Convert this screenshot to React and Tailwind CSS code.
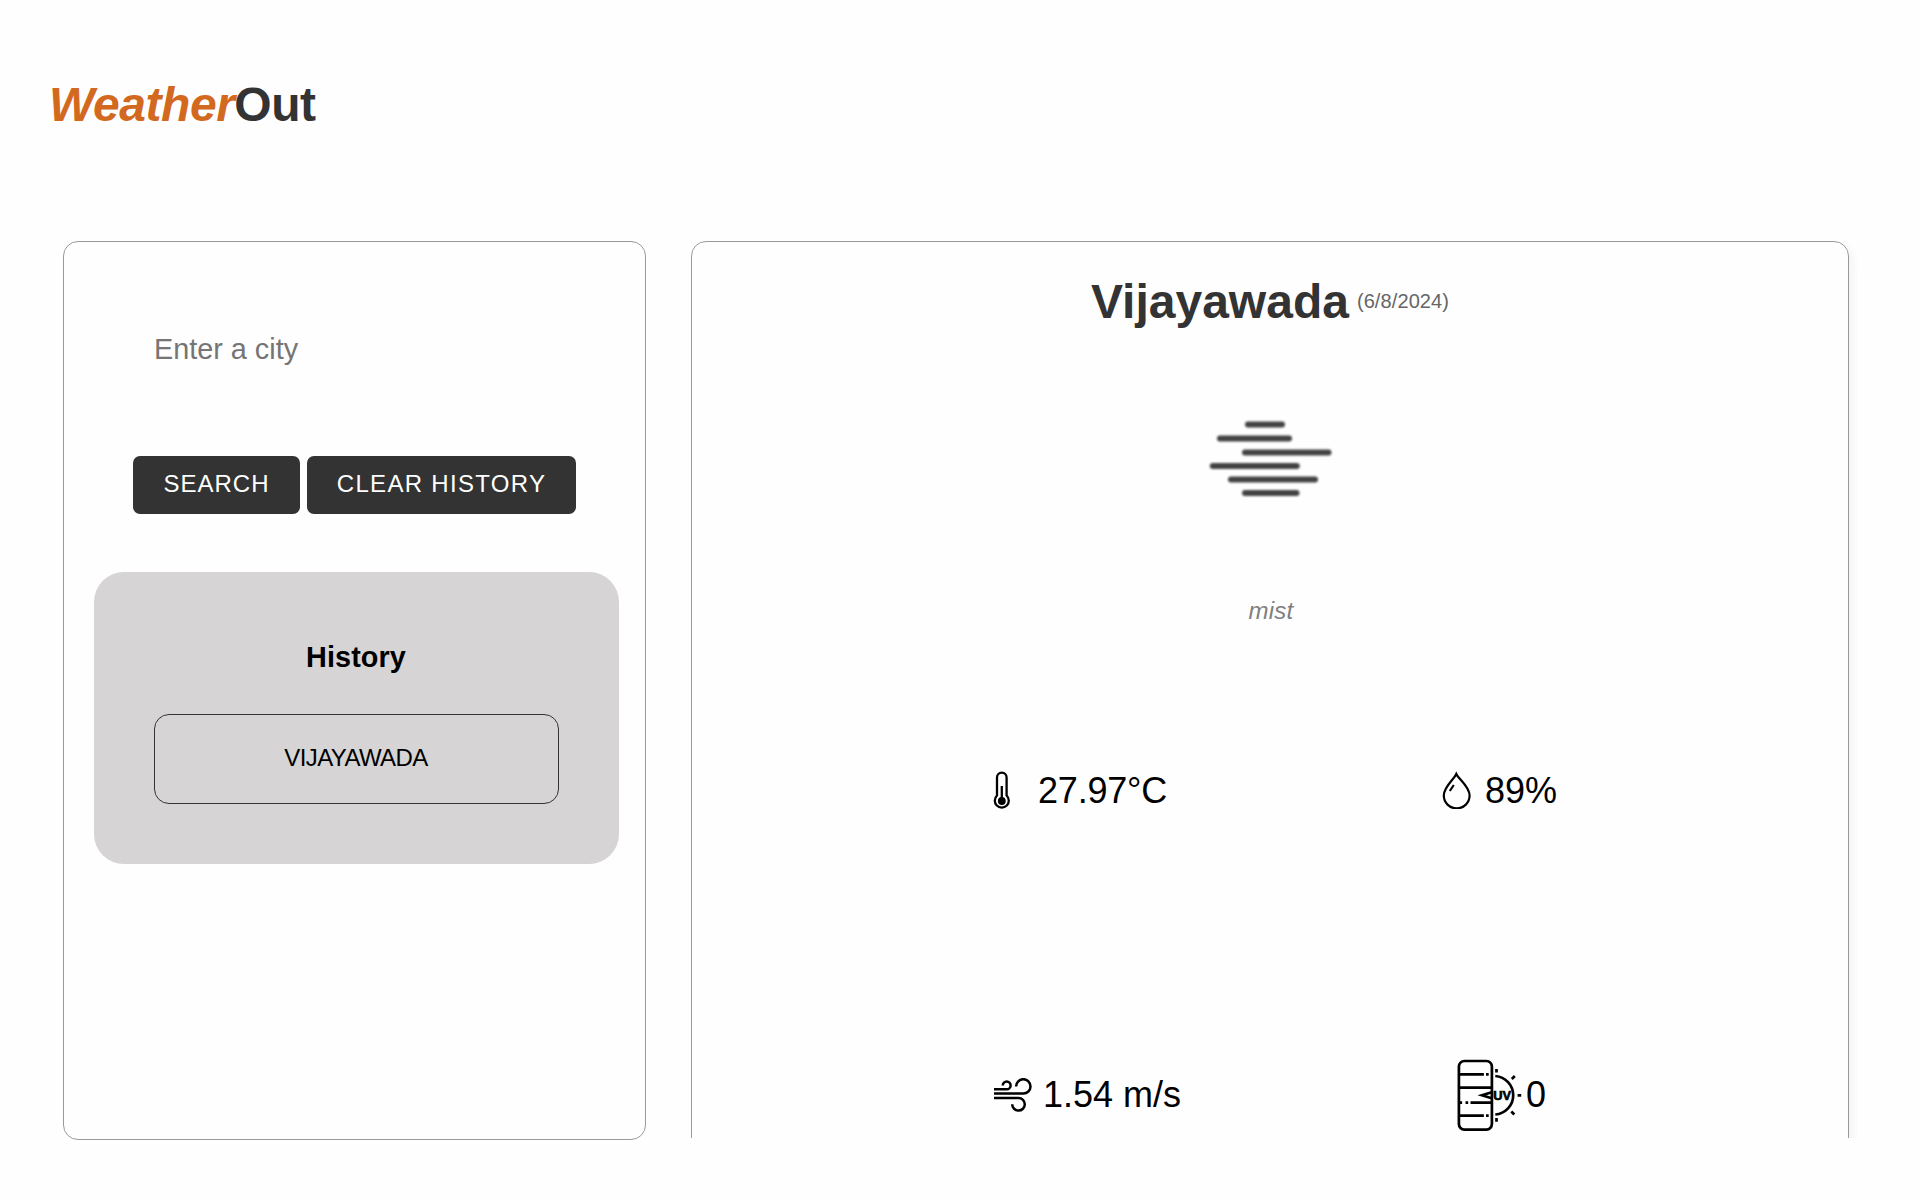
function ThermometerIcon() {
  return (
    <svg className="mb-[2px] h-[38px] w-[18px] shrink-0" viewBox="0 0 18 38" fill="none" stroke="#000" strokeWidth="2.300">
      <path d="M4 24.500V6.500a4.800 4.800 0 0 1 9.600 0v18a7 7 0 1 1-9.600 0Z" />
      <path d="M8.800 15v14" />
      <circle cx="8.800" cy="30" r="3.900" fill="#000" stroke="none" />
    </svg>
  );
}

function DropIcon() {
  return (
    <svg className="mb-[2px] h-[38px] w-[30px] shrink-0" viewBox="0 0 30 38" fill="none" stroke="#000" strokeWidth="2.200">
      <path d="M14.300 3C12 8.500 1.800 15.500 1.800 24.500a12.900 12.900 0 0 0 25.800 0C27.600 15.500 17 8.500 14.300 3Z" />
      <path d="M7.800 20l4-6" />
    </svg>
  );
}

function WindIcon() {
  return (
    <svg className="h-[34px] w-[38px] shrink-0" viewBox="0 0 38 34" fill="none" stroke="#000" strokeWidth="2.500">
      <path d="M0 11.300h12.700a3.900 3.900 0 1 0-3.900-3.900" />
      <path d="M0 15.600h29.300a7.200 7.200 0 1 0-7.200-7.200" />
      <path d="M0 20h24.500a6.300 6.300 0 1 1-6.300 6.300" />
    </svg>
  );
}

function UvIcon() {
  return (
    <svg className="h-[72px] w-[66px] shrink-0" viewBox="0 0 66 72" fill="none" stroke="#000" strokeWidth="2.700">
      <rect x="1.900" y="2" width="33" height="68.600" rx="5.500" />
      <path d="M1.900 15.300h25M29 15.300h2.700M1.900 28.700h33M1.900 43.700h3.200M8.500 43.700h2.700M13.500 43.700h21.400M1.900 56.700h25M29 56.700h2.700" />
      <path d="M34.700 33.200L25 36.300l9.700 3" />
      <path d="M38.300 17a19.300 19.300 0 0 1 0 38.500" />
      <path d="M39.500 10v3.600M54.800 20l3-3M60.600 36.300h3.600M54.300 52.500l3 3M39.500 59v3.700" />
      <text
        x="36.300"
        y="41"
        fill="#000"
        strokeWidth="0.700"
        textLength="17.800"
        lengthAdjust="spacingAndGlyphs"
        className="font-['Liberation_Sans'] text-[13px] font-bold"
      >
        UV
      </text>
    </svg>
  );
}

function MistIcon() {
  return (
    <svg
      className="h-[80px] w-[130px] blur-[0.9px]"
      viewBox="1205 418 130 80"
      fill="none"
      stroke="#424243"
      strokeWidth="6"
      strokeLinecap="round"
    >
      <path d="M1248 424.500h34M1220 438.500h69M1245 452.500h83.500M1212.800 466h84M1231 479.500h84M1245 493h51.500" />
    </svg>
  );
}

function SearchPanel() {
  return (
    <section className="flex h-[899px] w-[583px] flex-col items-center rounded-[15px] border border-[#999]">
      <input
        type="text"
        placeholder="Enter a city"
        className="mt-[90px] h-[34px] w-[401px] bg-transparent text-[28.8px] leading-[34px] outline-none placeholder:text-[#757575]"
      />
      <div className="mt-[90px] flex gap-[7px]">
        <button className="h-[58px] w-[167px] rounded-[7px] bg-[#333] pb-[3px] text-[24px] tracking-[1px] text-white">SEARCH</button>
        <button className="h-[58px] w-[269px] rounded-[7px] bg-[#333] pb-[3px] text-[24px] tracking-[1.3px] text-white">CLEAR HISTORY</button>
      </div>
      <div className="ml-[3px] mt-[58px] flex h-[292px] w-[525px] flex-col items-center rounded-[30px] bg-[#d6d4d5] px-[60px]">
        <h2 className="mt-[68px] text-[28.8px] font-bold leading-[34px] tracking-[0.1px]">History</h2>
        <button className="mt-[40px] h-[90px] w-full rounded-[15px] border border-[#333] pb-[3px] text-[24px] tracking-[-0.6px]">
          VIJAYAWADA
        </button>
      </div>
    </section>
  );
}

function WeatherPanel() {
  return (
    <div className="h-[897px] w-[1166px] overflow-hidden">
      <section className="flex h-[960px] w-[1158px] flex-col items-center rounded-[15px] border border-[#999] shadow-[5px_5px_10px_rgba(0,0,0,0.04)]">
        <div className="mt-[32px] flex gap-[8px]">
          <h2 className="text-[48px] font-bold leading-[56px] text-[#333]">Vijayawada</h2>
          <span className="mt-[15px] text-[20px] leading-[24px] tracking-[0.1px] text-[#666]">(6/8/2024)</span>
        </div>
        <div className="mr-px mt-[88px]">
          <MistIcon />
        </div>
        <p className="ml-[2px] mt-[99px] text-[24px] italic leading-[28px] tracking-[0.3px] text-[#808080]">mist</p>
        <div className="grid w-full grid-cols-[447px_1fr] pl-[301px] pt-[118px] text-[36px] leading-[40px]">
          <div className="flex h-[96px] items-center gap-[27px]">
            <ThermometerIcon />
            <span className="tracking-[-0.2px]">27.97°C</span>
          </div>
          <div className="flex h-[96px] items-center gap-[13px] pl-[2px]">
            <DropIcon />
            <span>89%</span>
          </div>
          <div className="mt-[208px] flex h-[96px] items-center gap-[11px] pl-px">
            <WindIcon />
            <span>1.54 m/s</span>
          </div>
          <div className="mt-[208px] flex h-[96px] items-center gap-[3px] pl-[17px]">
            <UvIcon />
            <span>0</span>
          </div>
        </div>
      </section>
    </div>
  );
}

export default function App() {
  return (
    <div className="h-[1201px] overflow-hidden bg-[#fefefe] font-['Liberation_Sans',Arial,sans-serif] text-black">
      <header className="pl-[49px] pt-[77px]">
        <h1 className="text-[48px] font-bold leading-[56px] tracking-[-0.45px] text-[#333]">
          <em className="text-[#d2691e]">Weather</em>Out
        </h1>
      </header>
      <main className="mt-[108px] flex gap-[45px] pl-[63px]">
        <SearchPanel />
        <WeatherPanel />
      </main>
    </div>
  );
}
